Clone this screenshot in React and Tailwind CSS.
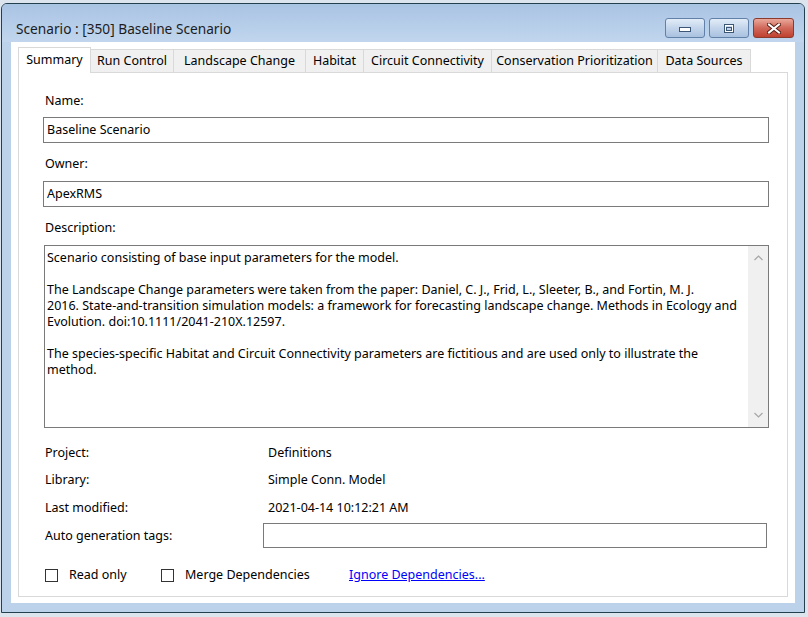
const tabs = [
  { label: "Summary", w: "w-[73px]", active: true },
  { label: "Run Control", w: "w-[83px]" },
  { label: "Landscape Change", w: "w-[132px]" },
  { label: "Habitat", w: "w-[58px]" },
  { label: "Circuit Connectivity", w: "w-[128px]" },
  { label: "Conservation Prioritization", w: "w-[166px]" },
  { label: "Data Sources", w: "w-[93px]" },
];

const descLines = [
  "Scenario consisting of base input parameters for the model.",
  "",
  "The Landscape Change parameters were taken from the paper: Daniel, C. J., Frid, L., Sleeter, B., and Fortin, M. J.",
  "2016. State-and-transition simulation models: a framework for forecasting landscape change. Methods in Ecology and",
  "Evolution. doi:10.1111/2041-210X.12597.",
  "",
  "The species-specific Habitat and Circuit Connectivity parameters are fictitious and are used only to illustrate the",
  "method.",
];

function CaptionButton({ kind }) {
  if (kind === "close") {
    return (
      <div className="w-[41px] h-[20px] rounded-[3px] border border-[#8a3b2e] bg-gradient-to-b from-[#e9a89b] via-[#d0685a] to-[#c0402e] flex items-center justify-center">
        <svg width="14" height="11" viewBox="0 0 14 11">
          <path d="M2 1.5 L12 9.5 M12 1.5 L2 9.5" stroke="#5a1f16" strokeWidth="4" strokeLinecap="square" />
          <path d="M2 1.5 L12 9.5 M12 1.5 L2 9.5" stroke="#ffffff" strokeWidth="2" strokeLinecap="square" />
        </svg>
      </div>
    );
  }
  return (
    <div className="w-[40px] h-[20px] rounded-[3px] border border-[#6281a8] bg-gradient-to-b from-[#e2ecf7] via-[#c3d5eb] to-[#a9c1df] flex items-center justify-center">
      {kind === "min" ? (
        <svg width="14" height="10" viewBox="0 0 14 10">
          <rect x="1.5" y="4.5" width="11" height="4" fill="#ffffff" stroke="#3c5676" />
        </svg>
      ) : (
        <svg width="12" height="11" viewBox="0 0 12 11">
          <rect x="1.5" y="1.5" width="9" height="8" fill="none" stroke="#3c5676" />
          <rect x="2.5" y="2.5" width="7" height="6" fill="none" stroke="#ffffff" />
          <rect x="3.5" y="4.5" width="5" height="3" fill="none" stroke="#3c5676" />
        </svg>
      )}
    </div>
  );
}

function Checkbox({ label, className }) {
  return (
    <div className={`flex items-center ${className}`}>
      <div className="w-[13px] h-[13px] border border-[#333333] bg-white" />
      <span className="ml-[11px]">{label}</span>
    </div>
  );
}

export default function App() {
  return (
    <div className="w-[808px] h-[617px] overflow-hidden bg-[#dce5ee] font-['Noto_Sans',sans-serif] text-[12.5px] leading-4 text-black">
      <div className="ml-px mt-[3px] w-[804px] h-[610px] border border-[#24404f] rounded-t-[6px] bg-[#bcd2eb] flex flex-col">
        {/* Title bar */}
        <div className="h-[38px] shrink-0 flex items-start rounded-t-[5px] bg-gradient-to-b from-[#a9c3e3] to-[#c1d6ee]">
          <div className="pl-[14px] pt-[16px] text-[13.7px] leading-[18px] text-[#1c1c1c]">
            Scenario : [350] Baseline Scenario
          </div>
          <div className="ml-auto mt-[14px] mr-[10px] flex gap-[4px]">
            <CaptionButton kind="min" />
            <CaptionButton kind="max" />
            <CaptionButton kind="close" />
          </div>
        </div>

        {/* Client area */}
        <div className="mx-[9px] h-[561px] shrink-0 bg-white px-[7px] pt-[5px] pb-[6px] flex flex-col">
          {/* Tabs */}
          <div className="flex items-end h-[26px] -mb-px relative z-10">
            {tabs.map((t) =>
              t.active ? (
                <div
                  key={t.label}
                  className={`${t.w} h-[26px] bg-white border-t border-l border-r border-[#d9d9d9] flex items-center justify-center pb-[2px]`}
                >
                  {t.label}
                </div>
              ) : (
                <div
                  key={t.label}
                  className={`${t.w} h-[24px] bg-[#f0f0f0] border-t border-r border-b border-[#d9d9d9] flex items-center justify-center`}
                >
                  {t.label}
                </div>
              )
            )}
          </div>

          {/* Tab page */}
          <div className="flex-1 border border-[#d9d9d9] pl-[24px] pr-[18px] pt-[20px] flex flex-col">
            <div className="ml-[2px]">Name:</div>
            <div className="mt-[8px] h-[26px] border border-[#7a7a7a] pl-[3px] flex items-center">
              Baseline Scenario
            </div>
            <div className="ml-[2px] mt-[13px]">Owner:</div>
            <div className="mt-[9px] h-[26px] border border-[#7a7a7a] pl-[3px] flex items-center">
              ApexRMS
            </div>
            <div className="ml-[2px] mt-[13px]">Description:</div>
            <div className="mt-[9px] ml-px h-[183px] border border-[#7a7a7a] flex">
              <div className="flex-1 pl-[2px] pt-[4px] whitespace-nowrap overflow-hidden">
                {descLines.map((l, i) => (
                  <div key={i} className="h-4">
                    {l}
                  </div>
                ))}
              </div>
              <div className="w-[20px] bg-[#f0f0f0] flex flex-col items-center justify-between pt-[9px] pb-[9px]">
                <svg width="9" height="6" viewBox="0 0 9 6">
                  <path d="M0.5 5 L4.5 1 L8.5 5" fill="none" stroke="#a6a6a6" strokeWidth="1.2" />
                </svg>
                <svg width="9" height="6" viewBox="0 0 9 6">
                  <path d="M0.5 1 L4.5 5 L8.5 1" fill="none" stroke="#a6a6a6" strokeWidth="1.2" />
                </svg>
              </div>
            </div>

            <div className="mt-[17px] ml-[2px] grid grid-cols-[223px_1fr]">
              <div>Project:</div>
              <div>Definitions</div>
            </div>
            <div className="mt-[11px] ml-[2px] grid grid-cols-[223px_1fr]">
              <div>Library:</div>
              <div>Simple Conn. Model</div>
            </div>
            <div className="mt-[12px] ml-[2px] grid grid-cols-[223px_1fr]">
              <div>Last modified:</div>
              <div>2021-04-14 10:12:21 AM</div>
            </div>
            <div className="mt-[7px] ml-[2px] grid grid-cols-[218px_1fr] items-center">
              <div>Auto generation tags:</div>
              <div className="h-[25px] mr-[2px] border border-[#7a7a7a]" />
            </div>

            <div className="mt-[19px] ml-[2px] flex items-center h-4">
              <Checkbox label="Read only" className="w-[116px]" />
              <Checkbox label="Merge Dependencies" className="w-[188px]" />
              <a href="#" className="text-[#0000ff] underline">
                Ignore Dependencies...
              </a>
            </div>
          </div>
        </div>
      </div>
    </div>
  );
}
